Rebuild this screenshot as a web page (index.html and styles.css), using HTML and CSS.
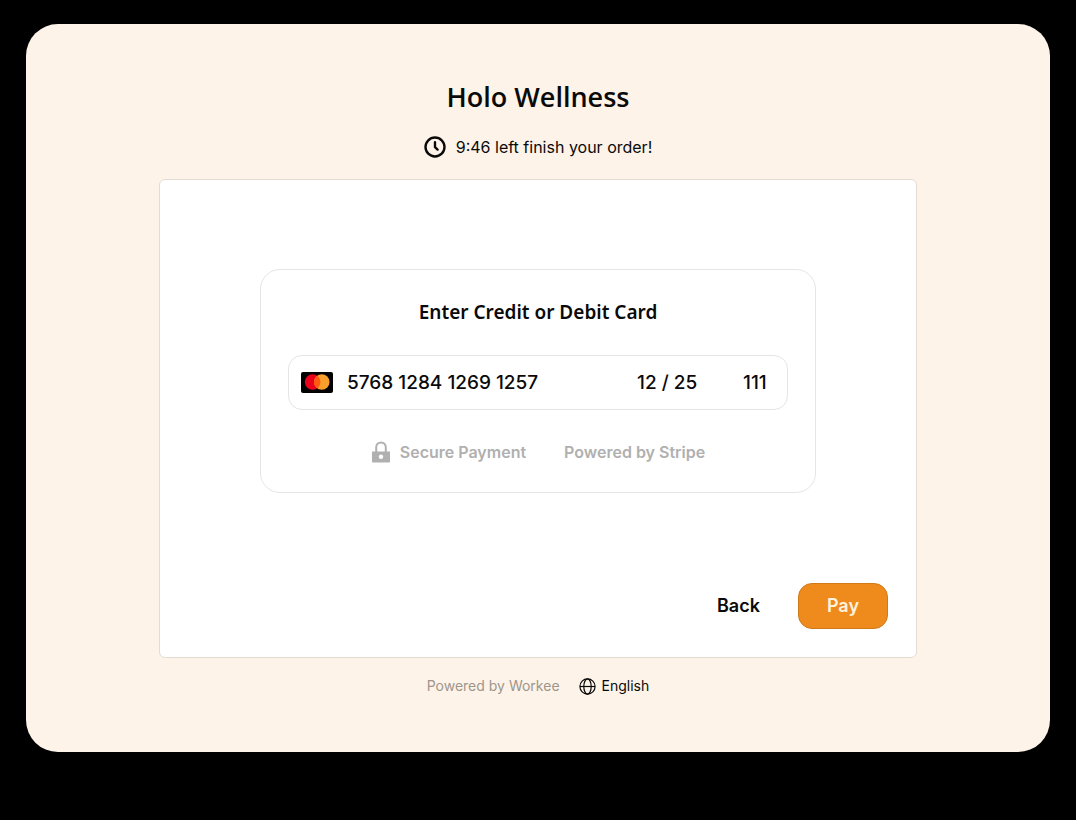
FILE: index.html
```html
<!DOCTYPE html>
<html lang="en">
  <head>
    <meta charset="utf-8" />
    <title>Holo Wellness</title>
    <meta name="viewport" content="width=device-width, initial-scale=1.0" />
    <link rel="stylesheet" href="styles.css">
  </head>
  <body>
    <main class="checkout">
      <h1 class="brand">Holo Wellness</h1>
      <p class="timer">
        <svg class="icon" width="22" height="22" viewBox="0 0 22 22" aria-hidden="true">
          <circle cx="11" cy="11" r="9.5" />
          <path d="M11 6.2v5l2.6 2.4" />
        </svg>
        <span>9:46 left finish your order!</span>
      </p>

      <form class="panel">
        <section class="card">
          <h2 class="card-title" id="card-title">Enter Credit or Debit Card</h2>
          <div class="card-fields" role="group" aria-labelledby="card-title">
            <svg class="card-brand" width="32" height="21" viewBox="0 0 32 21" aria-hidden="true">
              <rect width="32" height="21" rx="2" fill="#000" />
              <circle cx="11.6" cy="10" r="7.8" fill="#eb001b" />
              <circle cx="20.8" cy="10" r="7.8" fill="#f79e2b" />
              <path d="M16.2 3.7a7.8 7.8 0 0 1 0 12.6a7.8 7.8 0 0 1 0-12.6z" fill="#ff5a12" />
            </svg>
            <input class="card-input card-number" type="text" inputmode="numeric" aria-label="Card number" value="5768 1284 1269 1257">
            <input class="card-input card-expiry" type="text" inputmode="numeric" aria-label="Expiry date" value="12 / 25">
            <input class="card-input card-cvc" type="text" inputmode="numeric" aria-label="Security code" value="111">
          </div>
          <div class="card-notes">
            <span class="secure">
              <svg width="20" height="22" viewBox="0 0 20 22" aria-hidden="true">
                <path d="M5.2 11V6.2a4.8 4.8 0 0 1 9.6 0V11" fill="none" stroke="#b0b0b0" stroke-width="2" />
                <path d="M1 10.5h18V20.6a.9.9 0 0 1-.9.9H1.9a.9.9 0 0 1-.9-.9z" fill="#b0b0b0" />
                <circle cx="10" cy="15.8" r="2.2" fill="#fff" />
              </svg>
              Secure Payment
            </span>
            <span>Powered by Stripe</span>
          </div>
        </section>

        <div class="actions">
          <button class="btn" type="button">Back</button>
          <button class="btn btn-primary" type="submit">Pay</button>
        </div>
      </form>

      <footer class="footer">
        <span class="powered">Powered by Workee</span>
        <button class="language" type="button">
          <svg width="17" height="17" viewBox="0 0 17 17" aria-hidden="true">
            <circle cx="8.5" cy="8.5" r="7.6" />
            <ellipse cx="8.5" cy="8.5" rx="3.7" ry="7.6" />
            <path d="M1 8.5h15" />
          </svg>
          English
        </button>
      </footer>
    </main>
  </body>
</html>
```
FILE: styles.css
```css
* {
  box-sizing: border-box;
}

body {
  margin: 0;
  padding: 24px 26px;
  font-family: Inter, "Liberation Sans", sans-serif;
  color: #0a0a0a;
  background-color: #000;
}

h1, h2, p {
  margin: 0;
}

.checkout {
  display: flex;
  flex-direction: column;
  align-items: center;
  padding: 57px 24px 54px;
  border-radius: 32px;
  background-color: #fdf3e8;
}

.brand {
  font-family: "Open Sans", "Noto Sans", sans-serif;
  font-size: 27px;
  font-weight: 600;
  line-height: 32px;
}

.timer {
  display: flex;
  align-items: center;
  gap: 10px;
  margin: 22px 0 20px;
  font-size: 16px;
  line-height: 24px;
}

.icon {
  fill: none;
  stroke: #0a0a0a;
  stroke-width: 2.4;
  stroke-linecap: round;
  stroke-linejoin: round;
}

.panel {
  display: flex;
  flex-direction: column;
  align-items: center;
  width: 100%;
  max-width: 758px;
  padding: 89px 28px 28px;
  border: 1px solid #e4dcd3;
  border-radius: 6px;
  background-color: #fff;
}

.card {
  width: 100%;
  max-width: 556px;
  padding: 30px 27px 28px;
  border: 1px solid #e5e5e5;
  border-radius: 20px;
}

.card-title {
  font-family: "Noto Sans", sans-serif;
  font-size: 19px;
  font-weight: 600;
  line-height: 24px;
  text-align: center;
}

.card-fields {
  display: flex;
  align-items: center;
  height: 55px;
  margin: 31px 0 30px;
  padding: 0 16px 0 12px;
  border: 1px solid #e5e5e5;
  border-radius: 14px;
}

.card-brand {
  flex: none;
  margin-right: 14px;
}

.card-input {
  min-width: 0;
  padding: 0;
  border: 0;
  background: none;
  font: 500 19px/24px Inter, "Liberation Sans", sans-serif;
  color: #0a0a0a;
}

.card-number {
  flex: 1;
}

.card-expiry {
  width: 76px;
  margin-right: 30px;
}

.card-cvc {
  width: 28px;
}

.card-notes {
  display: flex;
  justify-content: center;
  gap: 38px;
  font-size: 16px;
  font-weight: 600;
  line-height: 24px;
  color: #b0b0b0;
}

.secure {
  display: flex;
  align-items: center;
  gap: 9px;
}

.actions {
  display: flex;
  align-self: flex-end;
  gap: 10px;
  margin-top: 90px;
}

.btn {
  height: 46px;
  padding: 0 28px;
  border: 0;
  background: none;
  font: 600 18px/24px Inter, "Liberation Sans", sans-serif;
  color: #0a0a0a;
  cursor: pointer;
}

.btn-primary {
  border: 1px solid #d07a17;
  border-radius: 14px;
  background-color: #ef8b1d;
  color: #fff3df;
}

.footer {
  display: flex;
  align-items: center;
  gap: 19px;
  margin-top: 16px;
  font-size: 14px;
  line-height: 24px;
}

.powered {
  color: #9d968c;
}

.language {
  display: flex;
  align-items: center;
  gap: 6px;
  padding: 0;
  border: 0;
  background: none;
  font: inherit;
  color: #0a0a0a;
  cursor: pointer;
}

.language svg {
  fill: none;
  stroke: #0a0a0a;
  stroke-width: 1.2;
}
```
